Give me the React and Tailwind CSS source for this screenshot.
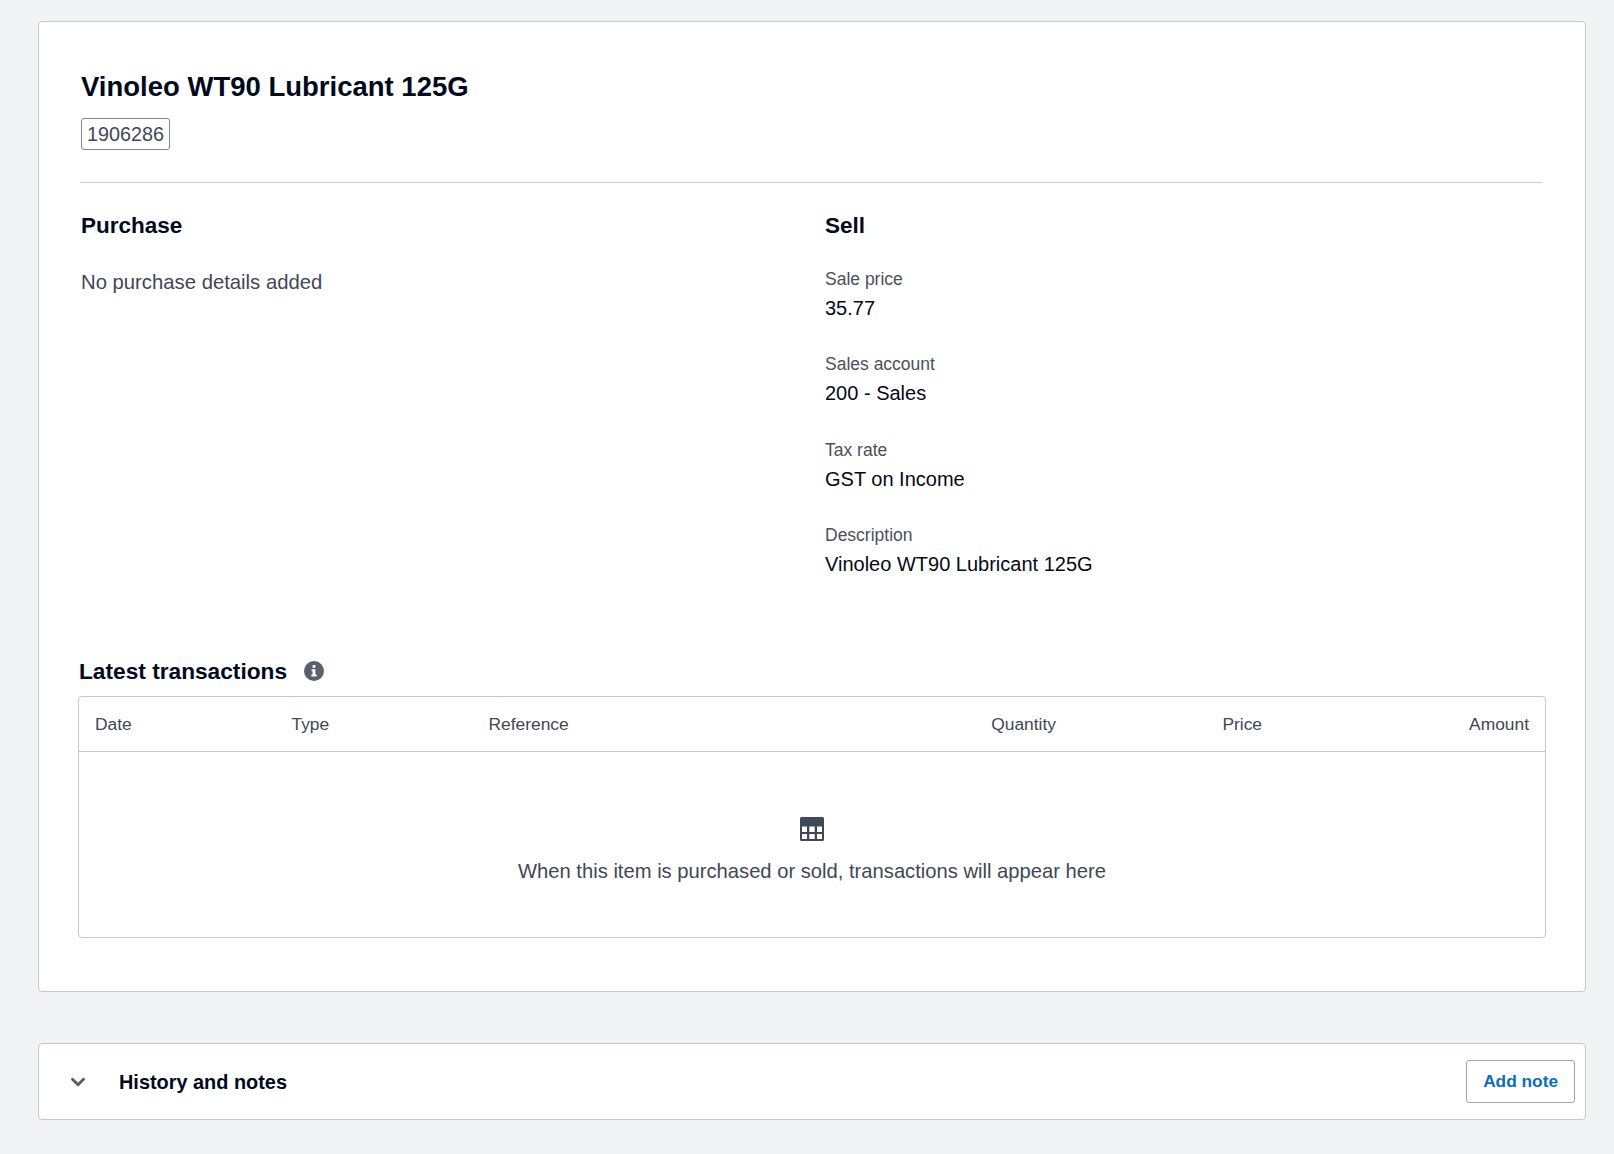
import React from 'react';
import { ChevronDown } from 'lucide-react';

function Detail({ label, value }) {
  return (
    <div className="h-[85.3px]">
      <div className="text-[17.5px] leading-[24px] text-[#4a505c]">{label}</div>
      <div className="mt-[5px] text-[20px] leading-[24px] text-[#050a14]">{value}</div>
    </div>
  );
}

function TableIcon() {
  return (
    <svg width="24" height="24" viewBox="0 0 24 24" className="block">
      <path
        fill="#404756"
        fillRule="evenodd"
        d="M1.500 0h21A1.500 1.500 0 0 1 24 1.500v21a1.500 1.500 0 0 1-1.500 1.500h-21A1.500 1.500 0 0 1 0 22.500v-21A1.500 1.500 0 0 1 1.500 0ZM2 9.500v5.500h5v-5.500H2Zm7.300 0v5.500h5.400v-5.500H9.300Zm7.700 0v5.500h5v-5.500h-5ZM2 17v5h5v-5H2Zm7.300 0v5h5.400v-5H9.300Zm7.700 0v5h5v-5h-5Z"
      />
    </svg>
  );
}

function InfoIcon() {
  return (
    <svg width="20" height="20" viewBox="0 0 20 20" className="ml-[17px] block">
      <circle cx="10" cy="10" r="10" fill="#5a5f6b" />
      <rect x="8.600" y="4" width="2.800" height="2.800" rx="0.600" fill="#fff" />
      <path fill="#fff" d="M7.600 8.300h3.800v5.200h1.200v2H7.400v-2h1.200v-3.200h-1Z" />
    </svg>
  );
}

export default function App() {
  return (
    <div className="min-h-[1154px] bg-[#f2f3f5] pl-[38px] pr-[28px] pt-[21px] font-['Liberation_Sans',Arial,sans-serif]">
      <div className="h-[971px] rounded-[4px] border border-[#c4c7cc] bg-white px-[41px] pt-[49px]">
        <div className="pl-[1px]">
          <h1 className="text-[27.5px] font-bold leading-[32px] text-[#000a1e]">Vinoleo WT90 Lubricant 125G</h1>
          <div className="mt-[15px] inline-block rounded-[3px] border border-[#80848c] px-[5px] text-[19.8px] leading-[30px] text-[#404756]">
            1906286
          </div>
        </div>

        <div className="mr-[1px] mt-[32px] border-t border-[#ccced2]" />

        <div className="grid h-[470px] grid-cols-[745px_1fr] pt-[29px]">
          <div className="pl-[1px]">
            <h2 className="text-[22.5px] font-bold leading-[28px] text-[#000a1e]">Purchase</h2>
            <p className="mt-[28px] text-[20.3px] leading-[28px] text-[#404756]">No purchase details added</p>
          </div>
          <div>
            <h2 className="text-[22.5px] font-bold leading-[28px] text-[#000a1e]">Sell</h2>
            <div className="mt-[27px]">
              <Detail label="Sale price" value="35.77" />
              <Detail label="Sales account" value="200 - Sales" />
              <Detail label="Tax rate" value="GST on Income" />
              <Detail label="Description" value="Vinoleo WT90 Lubricant 125G" />
            </div>
          </div>
        </div>

        <div className="ml-[-1px] flex h-[36px] items-center">
          <h2 className="text-[22.7px] font-bold leading-[28px] text-[#000a1e]">Latest transactions</h2>
          <InfoIcon />
        </div>

        <div className="ml-[-2px] mr-[-2px] mt-[7px] h-[242px] rounded-[4px] border border-[#c4c7cc]">
          <div className="grid h-[55px] grid-cols-[196.500px_197px_1fr_240px_206px_267px] items-center border-b border-[#c4c7cc] px-[16px] text-[17.4px] text-[#404756]">
            <div>Date</div>
            <div>Type</div>
            <div>Reference</div>
            <div className="text-right">Quantity</div>
            <div className="text-right">Price</div>
            <div className="text-right">Amount</div>
          </div>
          <div className="flex flex-col items-center pt-[65px]">
            <TableIcon />
            <p className="mt-[16px] text-[20.2px] leading-[28px] text-[#404756]">
              When this item is purchased or sold, transactions will appear here
            </p>
          </div>
        </div>
      </div>

      <div className="mt-[51px] flex h-[77px] items-center rounded-[4px] border border-[#c4c7cc] bg-white pl-[28px] pr-[10px]">
        <ChevronDown size={22} strokeWidth={3.2} className="text-[#5a5f6b]" />
        <h2 className="ml-[30px] flex-1 pt-[2px] text-[19.900px] font-bold text-[#000a1e]">History and notes</h2>
        <button className="h-[43px] rounded-[3px] border border-[#a0a4ab] bg-white px-[16px] text-[17.3px] font-bold text-[#0a6ebd]">
          Add note
        </button>
      </div>
    </div>
  );
}
